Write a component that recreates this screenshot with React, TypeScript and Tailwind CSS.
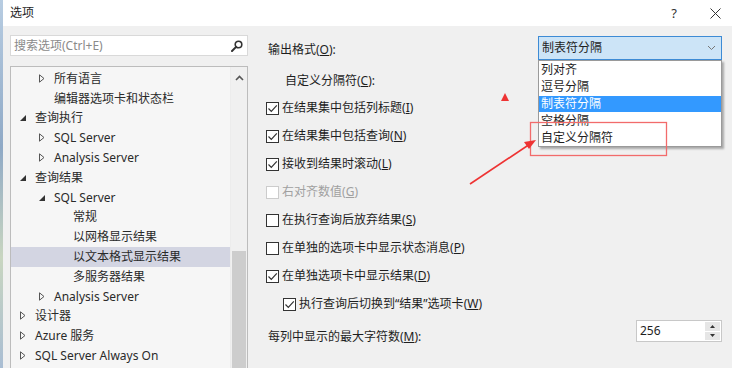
const font = "font-['Noto_Sans','Noto_Sans_CJK_SC',sans-serif]";

type Node = { level: 0 | 1 | 2; kind?: "closed" | "open"; text: string; selected?: boolean };

const tree: Node[] = [
  { level: 1, kind: "closed", text: "所有语言" },
  { level: 1, text: "编辑器选项卡和状态栏" },
  { level: 0, kind: "open", text: "查询执行" },
  { level: 1, kind: "closed", text: "SQL Server" },
  { level: 1, kind: "closed", text: "Analysis Server" },
  { level: 0, kind: "open", text: "查询结果" },
  { level: 1, kind: "open", text: "SQL Server" },
  { level: 2, text: "常规" },
  { level: 2, text: "以网格显示结果" },
  { level: 2, text: "以文本格式显示结果", selected: true },
  { level: 2, text: "多服务器结果" },
  { level: 1, kind: "closed", text: "Analysis Server" },
  { level: 0, kind: "closed", text: "设计器" },
  { level: 0, kind: "closed", text: "Azure 服务" },
  { level: 0, kind: "closed", text: "SQL Server Always On" },
];

const indent = { 0: "pl-[9px]", 1: "pl-[28px]", 2: "pl-[47px]" };

const Tri = ({ kind }: { kind?: "closed" | "open" }) => {
  if (kind === "closed")
    return (
      <svg width="6" height="9" viewBox="0 0 6 9" className="mt-[1px]">
        <path d="M0.5 0.8 L5 4.5 L0.5 8.2 Z" fill="none" stroke="#555" strokeWidth="1" />
      </svg>
    );
  if (kind === "open")
    return (
      <svg width="6" height="6" viewBox="0 0 6 6" className="mt-[3px]">
        <path d="M6 0 L6 6 L0 6 Z" fill="#333" />
      </svg>
    );
  return null;
};

const Check = ({ checked, disabled }: { checked?: boolean; disabled?: boolean }) => (
  <div
    className={`w-[13px] h-[13px] border flex items-center justify-center shrink-0 ${
      disabled ? "border-[#cccccc] bg-white" : "border-[#333] bg-white"
    }`}
  >
    {checked && (
      <svg width="11" height="11" viewBox="0 0 11 11">
        <path d="M1.5 5.5 L4.3 8.3 L9.8 2.3" fill="none" stroke="#333" strokeWidth="1.2" />
      </svg>
    )}
  </div>
);

const Opt = ({
  label,
  acc,
  checked,
  disabled,
  sub,
}: {
  label: string;
  acc: string;
  checked?: boolean;
  disabled?: boolean;
  sub?: boolean;
}) => (
  <div className={`h-[28px] shrink-0 flex items-center ${sub ? "pl-[17px]" : ""}`}>
    <Check checked={checked} disabled={disabled} />
    <span className={`ml-[3px] ${disabled ? "text-[#a0a0a0]" : "text-[#1e1e1e]"}`}>
      {label}(<u>{acc}</u>)
    </span>
  </div>
);

const options = ["列对齐", "逗号分隔", "制表符分隔", "空格分隔", "自定义分隔符"];

export default function App() {
  return (
    <div className={`relative w-[732px] h-[368px] overflow-hidden flex bg-[#f0f0f0] text-[12px] leading-[16px] ${font}`}>
      <div className="w-[3px] shrink-0 bg-[linear-gradient(to_bottom,#b8cde2,#8fa9c6_40%,#c9d6c0_70%,#a9bdd3)]" />
      <div className="flex-1 flex flex-col min-h-0">
        {/* title bar */}
        <div className="h-[26px] shrink-0 bg-white flex items-center pl-[7px] text-[#1e1e1e]">
          <span className="text-[12px]">选项</span>
          <span className="ml-auto mr-[33px] text-[13px] text-[#333]">?</span>
          <svg width="11" height="11" viewBox="0 0 11 11" className="mr-[11px]">
            <path d="M0.5 0.5 L10.5 10.5 M10.5 0.5 L0.5 10.5" stroke="#333" strokeWidth="1" />
          </svg>
        </div>

        <div className="flex-1 min-h-0 overflow-hidden flex">
          {/* left column */}
          <div className="w-[247px] shrink-0 pl-[7px] pr-[2px] flex flex-col">
            <div className="mt-[9px] h-[21px] shrink-0 bg-white border border-[#d9d9d9] flex items-center pl-[3px] pr-[4px]">
              <span className="text-[#8a8a8a]">搜索选项(Ctrl+E)</span>
              <svg width="12" height="12" viewBox="0 0 12 12" className="ml-auto">
                <circle cx="7.5" cy="4.5" r="3.3" fill="none" stroke="#333" strokeWidth="1.6" />
                <path d="M5.1 6.9 L1 11" stroke="#333" strokeWidth="2" strokeLinecap="round" />
              </svg>
            </div>
            <div className="mt-[10px] h-[310px] shrink-0 border border-[#bcbcbc] bg-[#f6f6f6] flex">
              <div className="flex-1 flex flex-col pt-[2px]">
                {tree.map((n, i) => (
                  <div
                    key={i}
                    className={`h-[19.8px] shrink-0 flex items-center ${indent[n.level]} ${
                      n.selected ? "bg-[#d3d5e2]" : ""
                    }`}
                  >
                    <div className="w-[15px] h-[12px] flex items-start">
                      <Tri kind={n.kind} />
                    </div>
                    <span className="text-[#2a2a2a] whitespace-nowrap">{n.text}</span>
                  </div>
                ))}
              </div>
              <div className="w-[17px] border-l border-[#ececec] bg-[#f0f0f0] flex flex-col items-center">
                <svg width="9" height="6" viewBox="0 0 9 6" className="mt-[8px]">
                  <path d="M1 5 L4.5 1.5 L8 5" fill="none" stroke="#555" strokeWidth="1.6" />
                </svg>
                <div className="mt-[170px] w-[14px] flex-1 bg-[#cdcdcd]" />
              </div>
            </div>
          </div>

          {/* right column */}
          <div className="flex-1 flex flex-col pl-[16px] pr-[10px] text-[#1e1e1e]">
            <div className="mt-[10px] h-[24px] shrink-0 flex items-center">
              <span className="ml-[2px] mt-[3px]">
                输出格式(<u>O</u>):
              </span>
              <div className="relative ml-auto w-[184px] h-[24px]">
                <div className="h-full bg-[#cce4f7] border border-[#3d8bd5] flex items-center pl-[3px] pr-[5px]">
                  <span>制表符分隔</span>
                  <svg width="9" height="6" viewBox="0 0 9 6" className="ml-auto">
                    <path d="M1 1 L4.5 4.5 L8 1" fill="none" stroke="#777" strokeWidth="1" />
                  </svg>
                </div>
                <div className="absolute left-0 top-[24px] w-[184px] pt-[1px] bg-white border border-[#9a9a9a] shadow-[2px_2px_2px_rgba(0,0,0,0.3)] z-10">
                  {options.map((o) => (
                    <div
                      key={o}
                      className={`h-[16.8px] flex items-center pl-[2px] ${
                        o === "制表符分隔" ? "bg-[#3399ff] text-white" : "text-[#1e1e1e]"
                      }`}
                    >
                      {o}
                    </div>
                  ))}
                </div>
              </div>
            </div>
            <div className="mt-[11px] h-[20px] shrink-0 flex items-center pl-[19px]">
              自定义分隔符(<u>C</u>):
            </div>
            <div className="mt-[3px] flex flex-col">
              <Opt label="在结果集中包括列标题" acc="I" checked />
              <Opt label="在结果集中包括查询" acc="N" checked />
              <Opt label="接收到结果时滚动" acc="L" checked />
              <Opt label="右对齐数值" acc="G" disabled />
              <Opt label="在执行查询后放弃结果" acc="S" />
              <Opt label="在单独的选项卡中显示状态消息" acc="P" />
              <Opt label="在单独选项卡中显示结果" acc="D" checked />
              <Opt label="执行查询后切换到“结果”选项卡" acc="W" checked sub />
            </div>
            <div className="mt-[2px] flex items-start">
              <span className="ml-[2px] mt-[9px]">
                每列中显示的最大字符数(<u>M</u>):
              </span>
              <div className="ml-auto w-[86px] h-[22px] bg-white border border-[#c8c8c8] flex items-center pl-[3px]">
                <span className="text-[#1e1e1e]">256</span>
                <div className="ml-auto mr-[1px] w-[15px] h-[18px] flex flex-col gap-[1px]">
                  <div className="flex-1 bg-[#e6e6e6] flex items-center justify-center">
                    <svg width="5" height="3" viewBox="0 0 5 3">
                      <path d="M0 3 L2.5 0 L5 3 Z" fill="#333" />
                    </svg>
                  </div>
                  <div className="flex-1 bg-[#e6e6e6] flex items-center justify-center">
                    <svg width="5" height="3" viewBox="0 0 5 3">
                      <path d="M0 0 L2.5 3 L5 0 Z" fill="#333" />
                    </svg>
                  </div>
                </div>
              </div>
            </div>
          </div>
        </div>
      </div>

      {/* red annotations */}
      <svg className="absolute inset-0 z-20 pointer-events-none" width="732" height="368" viewBox="0 0 732 368">
        <rect x="530.5" y="122.5" width="136" height="33" fill="none" stroke="#f26b6b" strokeWidth="1.3" />
        <path d="M501 101 L505 93 L509 101 Z" fill="#ee3333" />
        <path d="M470 184 L530 144" stroke="#ee3333" strokeWidth="1.6" />
        <path d="M536 140 L524 142 L529 149 Z" fill="#ee3333" />
      </svg>
    </div>
  );
}
